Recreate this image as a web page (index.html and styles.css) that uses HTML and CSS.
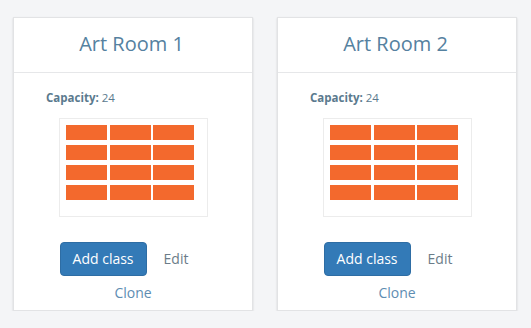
FILE: index.html
```html
<!DOCTYPE html>
<html>
<head>
<meta charset="utf-8">
<link rel="stylesheet" href="styles.css">
</head>
<body>
<div class="rooms">
  <div class="card">
    <div class="card-header"><h2 class="title">Art Room 1</h2></div>
    <div class="card-body">
      <div class="capacity"><b>Capacity:</b> 24</div>
      <div class="seatmap">
        <div class="seats">
          <span class="seat"></span><span class="seat"></span><span class="seat"></span>
          <span class="seat"></span><span class="seat"></span><span class="seat"></span>
          <span class="seat"></span><span class="seat"></span><span class="seat"></span>
          <span class="seat"></span><span class="seat"></span><span class="seat"></span>
        </div>
      </div>
      <div class="actions">
        <a class="btn btn-primary">Add class</a>
        <a class="btn-link edit">Edit</a>
      </div>
      <div class="clone-row"><a class="btn-link clone">Clone</a></div>
    </div>
  </div>
  <div class="card">
    <div class="card-header"><h2 class="title">Art Room 2</h2></div>
    <div class="card-body">
      <div class="capacity"><b>Capacity:</b> 24</div>
      <div class="seatmap">
        <div class="seats">
          <span class="seat"></span><span class="seat"></span><span class="seat"></span>
          <span class="seat"></span><span class="seat"></span><span class="seat"></span>
          <span class="seat"></span><span class="seat"></span><span class="seat"></span>
          <span class="seat"></span><span class="seat"></span><span class="seat"></span>
        </div>
      </div>
      <div class="actions">
        <a class="btn btn-primary">Add class</a>
        <a class="btn-link edit">Edit</a>
      </div>
      <div class="clone-row"><a class="btn-link clone">Clone</a></div>
    </div>
  </div>
</div>
</body>
</html>
```
FILE: styles.css
```css
html, body {
  margin: 0;
  padding: 0;
  background: #f4f5f7;
  font-family: "Open Sans", "Liberation Sans", sans-serif;
}
.rooms {
  display: flex;
  gap: 24px;
  padding: 17px 0 0 13px;
}
.card {
  width: 240px;
  height: 294px;
  box-sizing: border-box;
  background: #fff;
  border: 1px solid #e2e3e5;
  box-shadow: 0 1px 2px rgba(0, 0, 0, 0.14);
}
.card-header {
  border-bottom: 1px solid #e6e7e9;
  padding: 12px 0 14px;
  text-align: center;
}
.title {
  margin: 0 0 0 -3px;
  font-size: 20px;
  line-height: 28px;
  font-weight: 400;
  color: #5581a0;
}
.card-body {
  padding: 17px 0 0;
}
.capacity {
  font-size: 11.5px;
  line-height: 16px;
  color: #5b7a8e;
  padding-left: 32px;
}
.capacity b {
  font-weight: 700;
}
.seatmap {
  width: 149px;
  height: 99px;
  box-sizing: border-box;
  border: 1px solid #ececec;
  margin: 12px auto 0;
  padding: 6px 0 0 6px;
}
.seats {
  display: grid;
  grid-template-columns: 44px 43px 41px;
  grid-auto-rows: 15px;
  row-gap: 5px;
}
.seat {
  display: block;
  width: 41px;
  height: 15px;
  background: #f3692d;
}
.actions {
  display: flex;
  justify-content: center;
  align-items: center;
  margin-top: 25px;
  padding-right: 6px;
}
.btn {
  display: block;
  font-size: 14px;
  line-height: 20px;
  padding: 6px 12px;
  border-radius: 4px;
  border: 1px solid #2e6da4;
}
.btn-primary {
  background: #337ab7;
  color: #fff;
}
.btn-link {
  font-size: 14px;
  line-height: 20px;
  padding: 6px 12px;
  display: block;
}
.edit {
  color: #6b7c89;
  margin-left: 5px;
}
.clone-row {
  display: flex;
  justify-content: center;
  margin-top: 1px;
}
.clone {
  color: #5e8db2;
  padding: 0 12px;
  margin-top: 6px;
}
```
